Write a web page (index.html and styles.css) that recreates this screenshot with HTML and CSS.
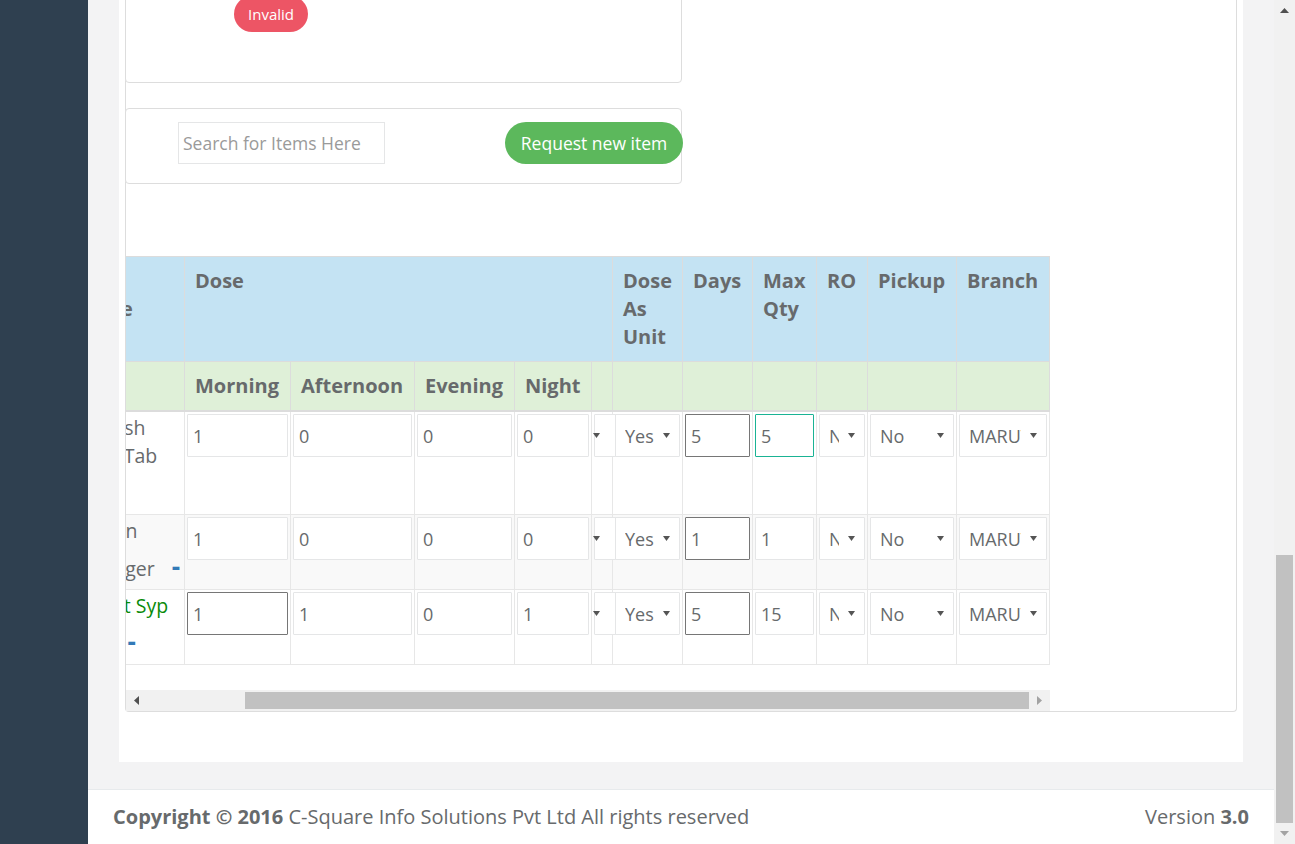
FILE: index.html
```html
<!DOCTYPE html>
<html lang="en">
<head>
<meta charset="utf-8">
<title>Prescription</title>
<link rel="stylesheet" href="styles.css">
</head>
<body>
<div class="app">
  <nav class="sidebar"></nav>
  <div class="page">
    <main class="wrapper">
      <section class="ibox">
        <div class="panel">
          <div class="card card-status">
            <span class="badge badge-danger">Invalid</span>
          </div>
          <div class="card card-search">
            <input class="search" type="text" placeholder="Search for Items Here">
            <button class="btn-request" type="button">Request new item</button>
          </div>
          <div class="grid">
            <div class="grid-clip">
              <table class="rx">
                <colgroup>
                  <col class="c-name"><col class="c-m"><col class="c-a"><col class="c-e"><col class="c-n"><col class="c-x">
                  <col class="c-u"><col class="c-d"><col class="c-q"><col class="c-ro"><col class="c-p"><col class="c-b">
                </colgroup>
                <thead>
                  <tr class="row-info">
                    <th class="th-name">Item Name</th>
                    <th colspan="5">Dose</th>
                    <th>Dose As Unit</th>
                    <th>Days</th>
                    <th>Max Qty</th>
                    <th>RO</th>
                    <th>Pickup</th>
                    <th>Branch</th>
                  </tr>
                  <tr class="row-success">
                    <th></th>
                    <th>Morning</th>
                    <th>Afternoon</th>
                    <th>Evening</th>
                    <th>Night</th>
                    <th></th><th></th><th></th><th></th><th></th><th></th><th></th>
                  </tr>
                </thead>
                <tbody>
                  <tr>
                    <td class="name"><span class="drug">Colgate Fresh<br>Crocin 650 Tab</span><br><a class="rm" href="#">-</a></td>
                    <td><input class="fc" value="1"></td>
                    <td><input class="fc" value="0"></td>
                    <td><input class="fc" value="0"></td>
                    <td><input class="fc" value="0"></td>
                    <td><span class="sel"><select class="fc"><option></option></select></span></td>
                    <td><span class="sel"><select class="fc"><option>Yes</option></select></span></td>
                    <td><input class="fc fc-dark" value="5"></td>
                    <td><input class="fc fc-focus" value="5"></td>
                    <td><span class="sel"><select class="fc"><option>No</option></select></span></td>
                    <td><span class="sel"><select class="fc"><option>No</option></select></span></td>
                    <td><span class="sel"><select class="fc"><option>MARUTHI</option></select></span></td>
                  </tr>
                  <tr class="striped">
                    <td class="name"><span class="drug">Vial Humulin<br>Travel Charger</span> <a class="rm" href="#">-</a></td>
                    <td><input class="fc" value="1"></td>
                    <td><input class="fc" value="0"></td>
                    <td><input class="fc" value="0"></td>
                    <td><input class="fc" value="0"></td>
                    <td><span class="sel"><select class="fc"><option></option></select></span></td>
                    <td><span class="sel"><select class="fc"><option>Yes</option></select></span></td>
                    <td><input class="fc fc-dark" value="1"></td>
                    <td><input class="fc" value="1"></td>
                    <td><span class="sel"><select class="fc"><option>No</option></select></span></td>
                    <td><span class="sel"><select class="fc"><option>No</option></select></span></td>
                    <td><span class="sel"><select class="fc"><option>MARUTHI</option></select></span></td>
                  </tr>
                  <tr>
                    <td class="name"><span class="drug drug-ok">Chericof Ext Syp</span><br><span class="drug">Sugarfree</span> <a class="rm" href="#">-</a></td>
                    <td><input class="fc fc-dark" value="1"></td>
                    <td><input class="fc" value="1"></td>
                    <td><input class="fc" value="0"></td>
                    <td><input class="fc" value="1"></td>
                    <td><span class="sel"><select class="fc"><option></option></select></span></td>
                    <td><span class="sel"><select class="fc"><option>Yes</option></select></span></td>
                    <td><input class="fc fc-dark" value="5"></td>
                    <td><input class="fc" value="15"></td>
                    <td><span class="sel"><select class="fc"><option>No</option></select></span></td>
                    <td><span class="sel"><select class="fc"><option>No</option></select></span></td>
                    <td><span class="sel"><select class="fc"><option>MARUTHI</option></select></span></td>
                  </tr>
                </tbody>
              </table>
            </div>
            <div class="hbar">
              <span class="sb-btn"><i class="tri tri-left"></i></span>
              <span class="hbar-track"><span class="hbar-thumb"></span></span>
              <span class="sb-btn"><i class="tri tri-right"></i></span>
            </div>
          </div>
        </div>
      </section>
    </main>
    <footer class="footer">
      <div><strong>Copyright &copy; 2016</strong> C-Square Info Solutions Pvt Ltd All rights reserved</div>
      <div>Version <strong>3.0</strong></div>
    </footer>
  </div>
  <div class="vbar">
    <span class="sb-btn"><i class="tri tri-up"></i></span>
    <span class="vbar-track"><span class="vbar-thumb"></span></span>
    <span class="sb-btn"><i class="tri tri-down"></i></span>
  </div>
</div>
</body>
</html>
```

FILE: styles.css
```css
* { box-sizing: border-box; }
html, body { margin: 0; height: 100%; }
body {
  font-family: "Open Sans", "Liberation Sans", sans-serif;
  font-size: 19.5px;
  line-height: 28px;
  color: #676a6c;
  background: #f3f3f4;
  overflow: hidden;
}
.app { display: flex; height: 844px; }
.sidebar { width: 88px; flex: none; background: #2f4050; }
.page {
  flex: 1;
  min-width: 0;
  display: flex;
  flex-direction: column;
  justify-content: flex-end;
  overflow: hidden;
  background: #f3f3f4;
}
.wrapper { padding: 0 31px 27px; }
.ibox { background: #fff; padding: 0 6px 50px; }
.panel {
  border: 1px solid #ddd;
  border-top: 0;
  border-radius: 0 0 4px 4px;
}
.card {
  width: 557px;
  margin-left: -1px;
  border: 1px solid #ddd;
  border-radius: 4px;
  background: #fff;
}
.card-status {
  display: flex;
  padding: 40px 0 50px 108px;
  margin-bottom: 25px;
}
.badge {
  display: flex;
  align-items: center;
  height: 36px;
  padding: 0 14px;
  border-radius: 18px;
  font-size: 15px;
  color: #fff;
}
.badge-danger { background: #ed5565; }
.card-search {
  display: flex;
  align-items: center;
  justify-content: space-between;
  padding: 13px 0 19px 52px;
  margin-bottom: 72px;
}
.search {
  width: 207px;
  height: 42px;
  border: 1px solid #e5e6e7;
  padding: 0 4px;
  font: 17.5px "Open Sans", "Liberation Sans", sans-serif;
  color: #676a6c;
  outline: none;
}
.search::placeholder { color: #9a9a9a; }
.btn-request {
  width: 178px;
  height: 42px;
  margin-right: -2px;
  border: 0;
  border-radius: 21px;
  background: #5cb85c;
  color: #fff;
  font: 17.5px "Open Sans", "Liberation Sans", sans-serif;
  padding: 0;
}

/* table grid */
.grid { width: 924px; }
.grid-clip { overflow: hidden; direction: rtl; }
.rx {
  direction: ltr;
  border-collapse: collapse;
  table-layout: fixed;
  width: 1039px;
  margin-bottom: 25px;
}
.c-name { width: 174px; }
.c-m { width: 106px; }
.c-a { width: 124px; }
.c-e { width: 100px; }
.c-n { width: 77px; }
.c-x { width: 21px; }
.c-u { width: 70px; }
.c-d { width: 70px; }
.c-q { width: 64px; }
.c-ro { width: 51px; }
.c-p { width: 89px; }
.c-b { width: 93px; }
.rx th {
  padding: 10px;
  border: 1px solid #dcdcdc;
  text-align: left;
  vertical-align: top;
  font-weight: 700;
  font-size: 20px;
}
.row-info th { background: #c4e3f3; }
.row-info .th-name { vertical-align: middle; white-space: nowrap; }
.row-success th { background: #dff0d8; border-bottom: 2px solid #dcdcdc; }
.rx td {
  padding: 2px;
  border: 1px solid #e7e7e7;
  vertical-align: top;
}
.rx tr.striped td { background: #f9f9f9; }
.rx td.name { padding: 2px 11px; white-space: nowrap; }
.drug-ok { color: #0a8a0a; }
.rm {
  display: inline-block;
  padding: 7px 11px 7px 12px;
  line-height: 28px;
  font-size: 26px;
  color: #337ab7;
  font-weight: 700;
  text-decoration: none;
}
.fc {
  display: block;
  width: 100%;
  height: 43px;
  margin: 0;
  border: 1px solid #e5e6e7;
  border-radius: 1px;
  padding: 0 5px;
  background: #fff;
  font: 18px "Open Sans", "Liberation Sans", sans-serif;
  color: #676a6c;
  outline: none;
}
.fc-dark { border-color: #767676; }
.fc-focus { border-color: #1ab394; }
.sel { display: block; position: relative; }
.sel select.fc {
  appearance: none;
  -webkit-appearance: none;
  padding: 0 25px 0 9px;
}
.sel::after {
  content: "";
  position: absolute;
  right: 10px;
  top: 19px;
  width: 7px;
  height: 5px;
  background: #555;
  clip-path: polygon(0 0, 100% 0, 50% 100%);
  pointer-events: none;
}

/* fake scrollbars */
.hbar { display: flex; height: 21px; background: #f1f1f1; }
.sb-btn {
  flex: none;
  width: 21px;
  height: 21px;
  display: flex;
  align-items: center;
  justify-content: center;
}
.hbar-track { flex: 1; display: flex; padding: 2px 0; }
.hbar-thumb { flex: 1; margin-left: 98px; background: #c1c1c1; }
.vbar {
  width: 21px;
  flex: none;
  display: flex;
  flex-direction: column;
  background: #f1f1f1;
}
.vbar-track { flex: 1; display: flex; flex-direction: column; padding: 0 2px; }
.vbar-thumb { flex: 1; margin-top: 534px; background: #c1c1c1; }
.tri { display: block; background: #505050; }
.tri-left { width: 5px; height: 9px; clip-path: polygon(100% 0, 100% 100%, 0 50%); }
.tri-right { width: 5px; height: 9px; clip-path: polygon(0 0, 0 100%, 100% 50%); background: #a3a3a3; }
.tri-up { width: 9px; height: 5px; clip-path: polygon(50% 0, 100% 100%, 0 100%); }
.tri-down { width: 9px; height: 5px; clip-path: polygon(0 0, 100% 0, 50% 100%); background: #a3a3a3; }

/* footer */
.footer {
  flex: none;
  height: 55px;
  display: flex;
  align-items: center;
  justify-content: space-between;
  padding: 0 25px;
  background: #fff;
  border-top: 1px solid #e7eaec;
  font-size: 20px;
}
.footer strong { font-weight: 700; }
```
